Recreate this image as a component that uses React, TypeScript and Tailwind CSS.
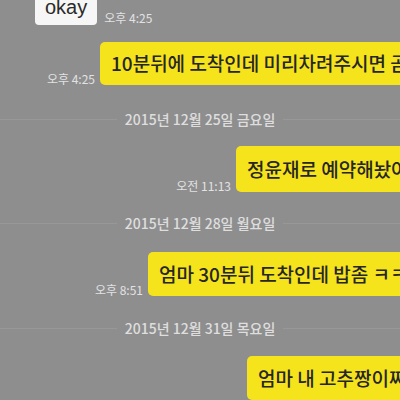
import React from "react";

interface Sent {
  kind: "sent";
  text: string;
  time: string;
  left: number;
  top: number;
  height: number;
}

interface DateLine {
  kind: "date";
  text: string;
  top: number;
}

type Item = Sent | DateLine;

const items: Item[] = [
  { kind: "sent", text: "10분뒤에 도착인데 미리차려주시면 곧", time: "오후 4:25", left: 100, top: 17, height: 43 },
  { kind: "date", text: "2015년 12월 25일 금요일", top: 21 },
  { kind: "sent", text: "정윤재로 예약해놨어", time: "오전 11:13", left: 236, top: 14, height: 46 },
  { kind: "date", text: "2015년 12월 28일 월요일", top: 18 },
  { kind: "sent", text: "엄마 30분뒤 도착인데 밥좀 ㅋㅋ", time: "오후 8:51", left: 148, top: 16, height: 44 },
  { kind: "date", text: "2015년 12월 31일 목요일", top: 19 },
  { kind: "sent", text: "엄마 내 고추짱이짜", time: "", left: 247, top: 15, height: 44 },
];

const kr = { fontFamily: '"Noto Sans CJK KR", "Noto Sans", sans-serif' };

export default function App() {
  return (
    <div className="w-[400px] h-[400px] overflow-hidden bg-[#8e8e8f] flex flex-col" style={kr}>
      {/* received message, cut off at the top */}
      <div className="flex items-end mt-[-5px] pl-[35px] gap-[7px]">
        <div
          className="bg-[#f6f6f6] rounded-[4px] px-[10px] pb-[6px] text-[20px] leading-[24px] text-[#2a2a2a]"
          style={{ fontFamily: '"Liberation Sans", Arial, sans-serif' }}
        >
          okay
        </div>
        <span className="text-[12px] leading-[13px] text-[#e2e2e2] mb-[1px] whitespace-nowrap">오후 4:25</span>
      </div>

      {items.map((it, i) =>
        it.kind === "date" ? (
          <div key={i} className="flex items-center h-[30px]" style={{ marginTop: it.top }}>
            <div className="flex-1 h-px bg-[#989899]" />
            <span className="px-[8px] text-[14px] leading-[18px] font-medium text-[#dedede] whitespace-nowrap">{it.text}</span>
            <div className="flex-1 h-px bg-[#989899]" />
          </div>
        ) : (
          <div key={i} className="flex items-end" style={{ marginTop: it.top }}>
            <div className="flex justify-end shrink-0 pr-[5px]" style={{ width: it.left }}>
              <span className="text-[12px] leading-[13px] text-[#e2e2e2] whitespace-nowrap">{it.time}</span>
            </div>
            <div
              className="shrink-0 flex items-center bg-[#f5e31c] rounded-[5px] px-[11px] text-[19px] font-medium text-[#262626] whitespace-nowrap"
              style={{ height: it.height }}
            >
              {it.text}
            </div>
          </div>
        )
      )}
    </div>
  );
}
